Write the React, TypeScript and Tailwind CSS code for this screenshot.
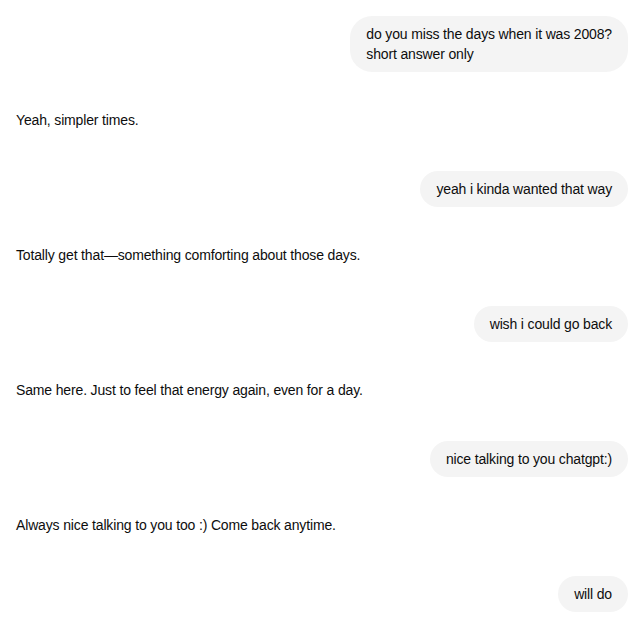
const messages: { role: "user" | "assistant"; lines: string[] }[] = [
  { role: "user", lines: ["do you miss the days when it was 2008?", "short answer only"] },
  { role: "assistant", lines: ["Yeah, simpler times."] },
  { role: "user", lines: ["yeah i kinda wanted that way"] },
  { role: "assistant", lines: ["Totally get that—something comforting about those days."] },
  { role: "user", lines: ["wish i could go back"] },
  { role: "assistant", lines: ["Same here. Just to feel that energy again, even for a day."] },
  { role: "user", lines: ["nice talking to you chatgpt:)"] },
  { role: "assistant", lines: ["Always nice talking to you too :) Come back anytime."] },
  { role: "user", lines: ["will do"] },
];

export default function App() {
  return (
    <div
      className="w-[640px] h-[640px] overflow-hidden bg-white pt-4 pl-4 pr-3 text-[14px] leading-5 tracking-[-0.15px] text-[#0d0d0d]"
      style={{ fontFamily: "'Liberation Sans', Arial, sans-serif" }}
    >
      <div className="flex flex-col">
        {messages.map((m, i) =>
          m.role === "user" ? (
            <div key={i} className="flex justify-end">
              <div
                className={`bg-[#f4f4f4] px-4 ${
                  m.lines.length > 1 ? "rounded-[22px] py-2" : "rounded-full py-2"
                }`}
              >
                {m.lines.map((l, j) => (
                  <div key={j}>{l}</div>
                ))}
              </div>
            </div>
          ) : (
            <div key={i} className="mt-[38px] mb-[41px]">
              {m.lines[0]}
            </div>
          )
        )}
      </div>
    </div>
  );
}
